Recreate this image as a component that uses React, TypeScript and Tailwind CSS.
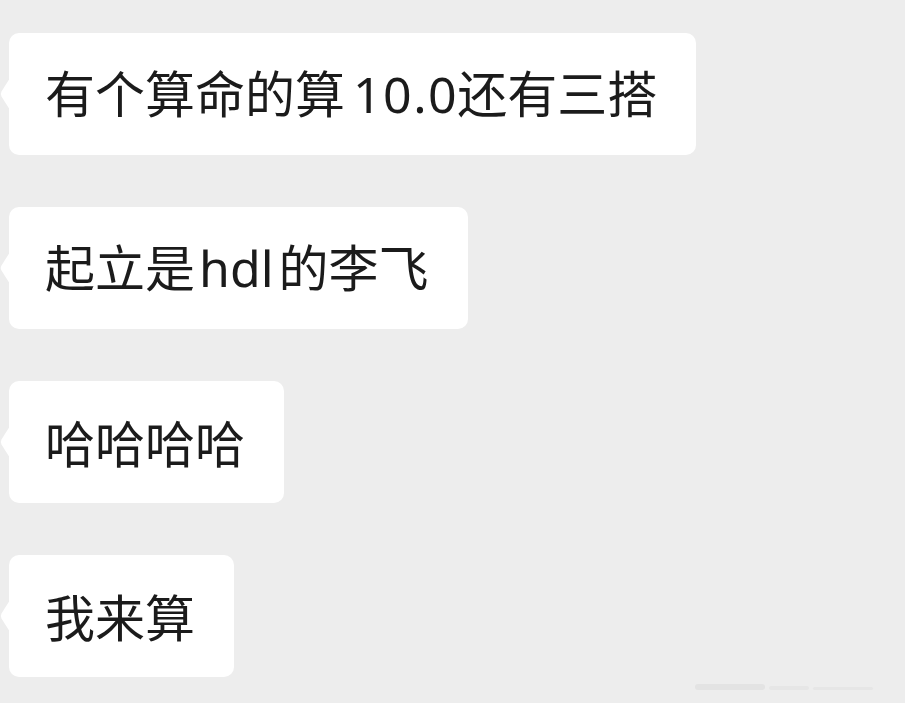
import React from "react";

const latinFont = '"Noto Sans", "Noto Sans CJK SC", sans-serif';

const msgs: { key: string; segs: React.ReactNode }[] = [
  {
    key: "a",
    segs: (
      <>
        <span>有个算命的算</span>
        <span className="ml-[8px] mr-[-1px]" style={{ fontFamily: latinFont, letterSpacing: "1.5px" }}>10.0</span>
        <span>还有三搭</span>
      </>
    ),
  },
  {
    key: "b",
    segs: (
      <>
        <span>起立是</span>
        <span className="ml-[4px] mr-[5px]" style={{ fontFamily: latinFont }}>hdl</span>
        <span>的李飞</span>
      </>
    ),
  },
  { key: "c", segs: <span>哈哈哈哈</span> },
  { key: "d", segs: <span>我来算</span> },
];

function Bubble({ children }: { children: React.ReactNode }) {
  return (
    <div className="relative ml-[9px] self-start h-[122px] flex items-center rounded-[10px] bg-white pl-[36px] pr-[39px]">
      <svg className="absolute left-[-9px] top-1/2 -translate-y-1/2" width="10" height="32" viewBox="0 0 10 32">
        <path d="M10 0 L1.5 13.5 Q0 16 1.5 18.5 L10 32 Z" fill="#ffffff" />
      </svg>
      <span
        className="text-[50px] leading-none text-[#1b1b1b] whitespace-pre -mt-[3px]"
        style={{ fontFamily: '"Noto Sans CJK SC", "Noto Sans", sans-serif' }}
      >
        {children}
      </span>
    </div>
  );
}

export default function App() {
  return (
    <div className="relative w-[905px] h-[703px] bg-[#ededed] overflow-hidden flex flex-col gap-[52px] pt-[33px]">
      {msgs.map((m) => (
        <Bubble key={m.key}>{m.segs}</Bubble>
      ))}
      <div className="absolute left-[695px] top-[684px] flex items-end gap-[4px]">
        <div className="w-[70px] h-[6px] bg-[#e3e3e3] rounded-sm" />
        <div className="w-[40px] h-[4px] bg-[#e6e6e6] rounded-sm" />
        <div className="w-[60px] h-[3px] bg-[#e6e6e6] rounded-sm" />
      </div>
    </div>
  );
}
